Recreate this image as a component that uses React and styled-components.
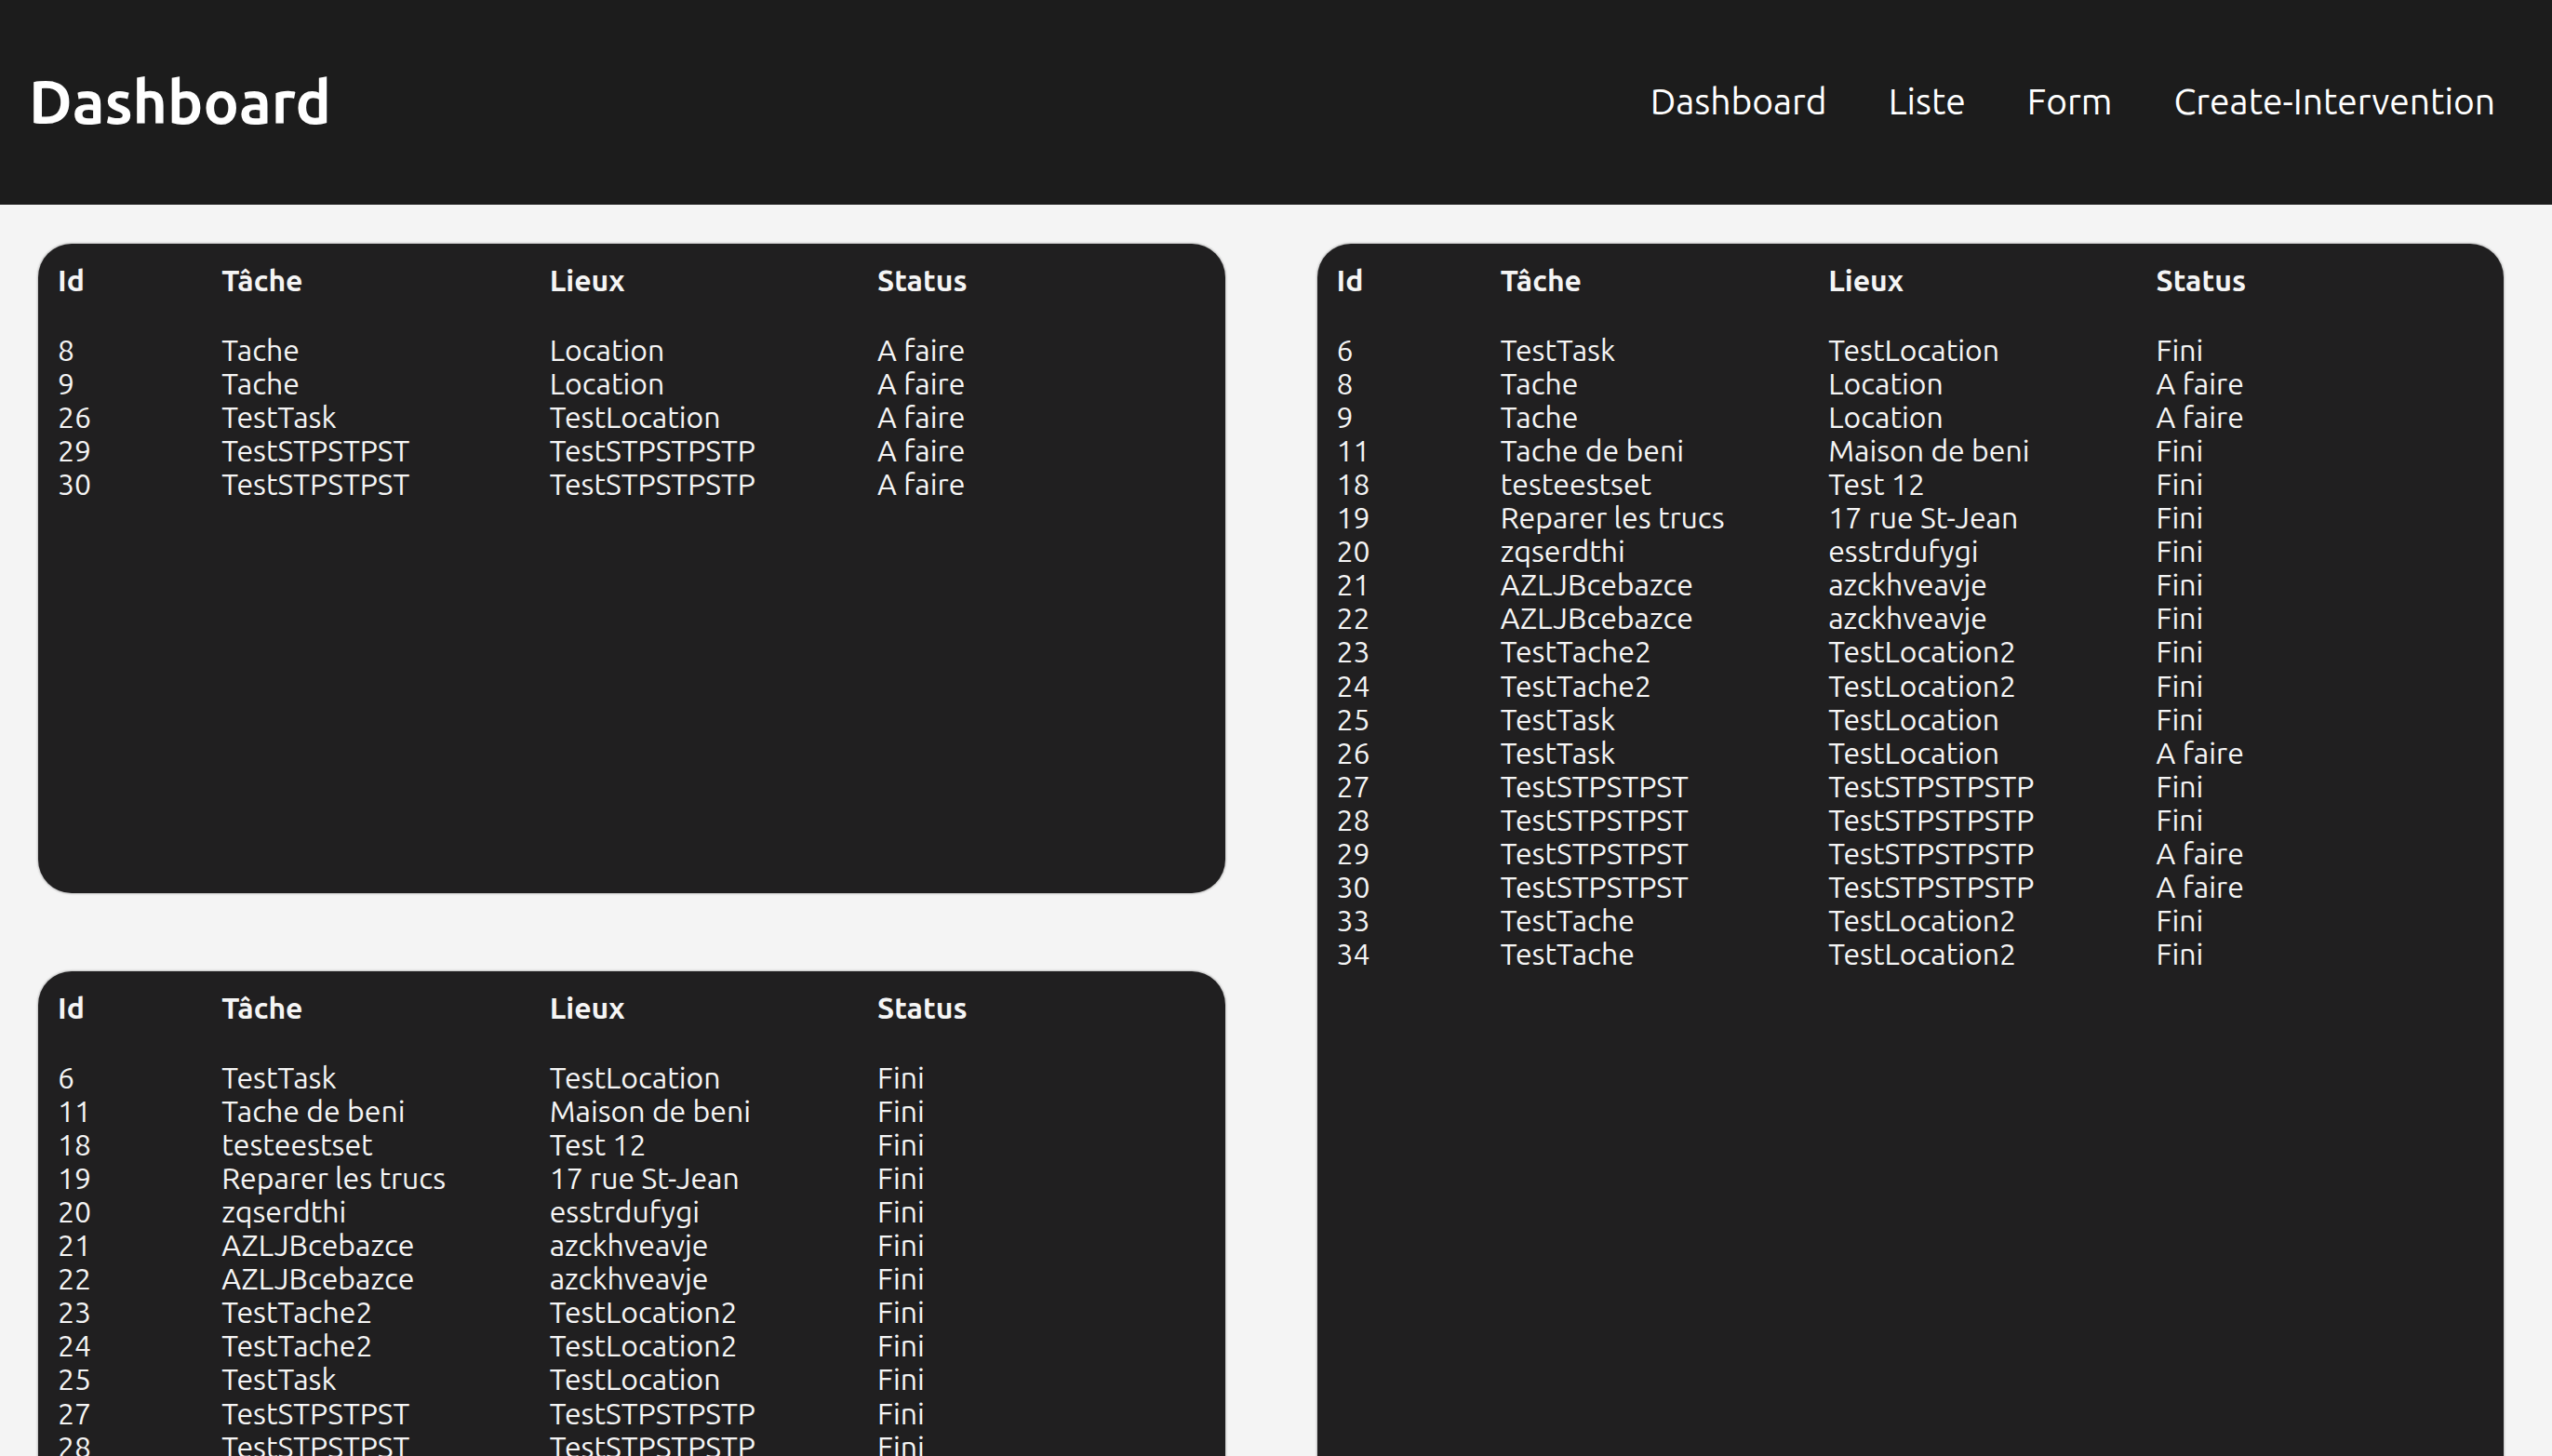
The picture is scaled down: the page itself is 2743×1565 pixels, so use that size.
import React from 'react';
import styled, { createGlobalStyle } from 'styled-components';

const GlobalStyle = createGlobalStyle`
    html::-webkit-scrollbar {
        width: 5px;
    }
    html::-webkit-scrollbar-track {
        background: #f4f4f4;
    }
    html::-webkit-scrollbar-thumb {
        background: #7a7a7a;
    }
    body {
        margin: 0;
        background: #f4f4f4;
        font-family: "Ubuntu", "Open Sans", "Noto Sans", sans-serif;
        color: #ffffff;
    }
`;

const NavBar = styled.header`
    box-sizing: border-box;
    display: flex;
    justify-content: space-between;
    align-items: center;
    height: 220px;
    padding: 0 61px 3px 31px;
    background: #1c1c1c;
`;

const Title = styled.h1`
    margin: 0;
    font-size: 64px;
    font-weight: 700;
    color: #ffffff;
`;

const Links = styled.nav`
    display: flex;
    gap: 66px;
`;

const NavLink = styled.a`
    font-size: 39px;
    color: #ffffff;
    text-decoration: none;
    cursor: pointer;
`;

const Board = styled.main`
    display: grid;
    grid-template-columns: 1fr 1fr;
    grid-template-rows: 698px 698px;
    column-gap: 99px;
    row-gap: 84px;
    padding: 42px 52px 111px 41px;
`;

const Card = styled.section`
    grid-row: ${({ $tall }) => ($tall ? 'span 2' : 'auto')};
    background: #201f20;
    border-radius: 36px;
    box-shadow: 0 0 2px 1px rgba(0, 0, 0, 0.22);
    padding: 21px 21px;
    overflow: hidden;
`;

const Row = styled.div`
    display: grid;
    grid-template-columns: 1fr 2fr 2fr 2fr;
    font-size: 32px;
    line-height: 36.05px;
    font-weight: ${({ $head }) => ($head ? 700 : 400)};
    margin-bottom: ${({ $head }) => ($head ? '39px' : '0')};
    color: #f5f5f5;
    white-space: nowrap;
`;

const todo = [
    [8, 'Tache', 'Location', 'A faire'],
    [9, 'Tache', 'Location', 'A faire'],
    [26, 'TestTask', 'TestLocation', 'A faire'],
    [29, 'TestSTPSTPST', 'TestSTPSTPSTP', 'A faire'],
    [30, 'TestSTPSTPST', 'TestSTPSTPSTP', 'A faire'],
];

const done = [
    [6, 'TestTask', 'TestLocation', 'Fini'],
    [11, 'Tache de beni', 'Maison de beni', 'Fini'],
    [18, 'testeestset', 'Test 12', 'Fini'],
    [19, 'Reparer les trucs', '17 rue St-Jean', 'Fini'],
    [20, 'zqserdthi', 'esstrdufygi', 'Fini'],
    [21, 'AZLJBcebazce', 'azckhveavje', 'Fini'],
    [22, 'AZLJBcebazce', 'azckhveavje', 'Fini'],
    [23, 'TestTache2', 'TestLocation2', 'Fini'],
    [24, 'TestTache2', 'TestLocation2', 'Fini'],
    [25, 'TestTask', 'TestLocation', 'Fini'],
    [27, 'TestSTPSTPST', 'TestSTPSTPSTP', 'Fini'],
    [28, 'TestSTPSTPST', 'TestSTPSTPSTP', 'Fini'],
    [33, 'TestTache', 'TestLocation2', 'Fini'],
    [34, 'TestTache', 'TestLocation2', 'Fini'],
];

const all = [...todo, ...done].sort((a, b) => a[0] - b[0]);

const TaskTable = ({ rows, tall }) => (
    <Card $tall={tall}>
        <Row $head>
            <span>Id</span>
            <span>Tâche</span>
            <span>Lieux</span>
            <span>Status</span>
        </Row>
        {rows.map((r) => (
            <Row key={r[0]}>
                {r.map((cell, i) => (
                    <span key={i}>{cell}</span>
                ))}
            </Row>
        ))}
    </Card>
);

const App = () => {
    return (
        <>
            <GlobalStyle />
            <NavBar>
                <Title>Dashboard</Title>
                <Links>
                    <NavLink>Dashboard</NavLink>
                    <NavLink>Liste</NavLink>
                    <NavLink>Form</NavLink>
                    <NavLink>Create-Intervention</NavLink>
                </Links>
            </NavBar>
            <Board>
                <TaskTable rows={todo} />
                <TaskTable rows={all} tall />
                <TaskTable rows={done} />
            </Board>
        </>
    );
};

export default App;
